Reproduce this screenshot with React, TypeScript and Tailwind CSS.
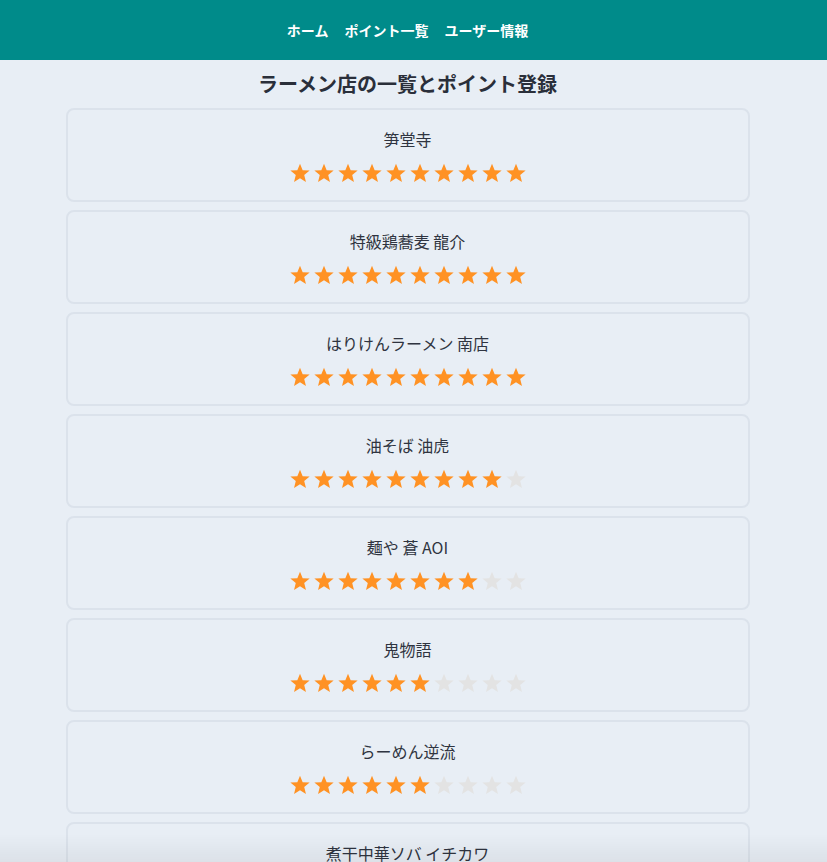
const shops = [
  { name: "笋堂寺", points: 10 },
  { name: "特級鶏蕎麦 龍介", points: 10 },
  { name: "はりけんラーメン 南店", points: 10 },
  { name: "油そば 油虎", points: 9 },
  { name: "麺や 蒼 AOI", points: 8 },
  { name: "鬼物語", points: 6 },
  { name: "らーめん逆流", points: 6 },
  { name: "煮干中華ソバ イチカワ", points: 7 },
];

const Star = ({ on }: { on: boolean }) => (
  <svg width="22" height="22" viewBox="0 0 24 24">
    <path
      d="M12 1.8l2.9 7.1 7.6.5-5.9 4.9 1.9 7.4L12 17.6l-6.5 4.1 1.9-7.4-5.9-4.9 7.6-.5z"
      fill={on ? "#ff9224" : "#e3e3e3"}
    />
  </svg>
);

const App = () => {
  return (
    <div
      className="min-h-screen bg-[#e8eef5] text-[#2d3748]"
      style={{ fontFamily: '"Noto Sans CJK JP", "Noto Sans", sans-serif' }}
    >
      <header className="h-[60px] bg-[#008b8a]">
        <nav className="w-[815px] h-full flex items-center justify-center gap-4 text-white text-sm font-bold">
          <a>ホーム</a>
          <a>ポイント一覧</a>
          <a>ユーザー情報</a>
        </nav>
      </header>

      <main className="w-[815px]">
        <h1 className="text-center text-[20px] font-bold leading-[48px] text-[#2a2f3a]">
          ラーメン店の一覧とポイント登録
        </h1>
        <div className="w-[684px] mx-auto flex flex-col gap-2 pb-8">
          {shops.map((s) => (
            <div
              key={s.name}
              className="border-2 border-[#dbe2eb] rounded-lg pt-[18px] pb-4 flex flex-col items-center gap-3"
            >
              <p className="text-[16px] leading-[22px] text-[#2f3440]">{s.name}</p>
              <div className="flex gap-[2px]">
                {Array.from({ length: 10 }, (_, i) => (
                  <Star key={i} on={i < s.points} />
                ))}
              </div>
            </div>
          ))}
        </div>
      </main>

      <div className="fixed bottom-0 left-0 right-0 h-[28px] pointer-events-none bg-gradient-to-b from-transparent to-[rgba(0,0,0,0.05)]" />
    </div>
  );
};

export default App;
